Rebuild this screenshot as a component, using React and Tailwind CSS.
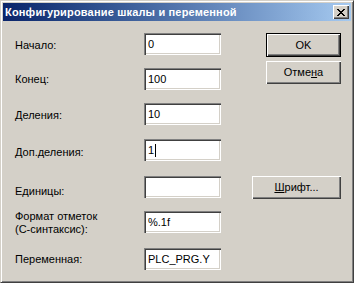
import React from "react";

const font = "font-['Liberation_Sans',Arial,sans-serif]";

function Field({ children }) {
  return (
    <div className="w-[77px] h-[22px] bg-white shadow-[inset_1px_1px_0_#808080,inset_2px_2px_0_#404040,inset_-1px_-1px_0_#ffffff,inset_-2px_-2px_0_#d4d0c8] flex items-center pl-[4px] text-[11px] text-black leading-none">
      {children}
    </div>
  );
}

function Row({ label, value, lt, mt }) {
  return (
    <div className={`flex items-start ${mt}`}>
      <div className={`w-[129px] text-[11px] leading-[13px] text-black ${lt}`}>{label}</div>
      <Field>{value}</Field>
    </div>
  );
}

function Btn({ children, w, def }) {
  const inner = (
    <div className="h-full w-full flex items-center justify-center bg-[#d4d0c8] shadow-[inset_1px_1px_0_#ffffff,inset_-1px_-1px_0_#404040,inset_-2px_-2px_0_#808080] text-[11px] text-black leading-none">
      {children}
    </div>
  );
  if (def) {
    return <div className={`${w} h-[24px] border border-black`}>{inner}</div>;
  }
  return <div className={`${w} h-[23px]`}>{inner}</div>;
}

export default function App() {
  return (
    <div className={`w-[354px] h-[283px] bg-[#d4d0c8] border border-t-[#d4d0c8] border-l-[#d4d0c8] border-r-[#404040] border-b-[#404040] shadow-[inset_1px_1px_0_#ffffff,inset_-1px_-1px_0_#808080] p-[2px] ${font}`}>
      <div className="h-[18px] flex items-center justify-between bg-linear-to-r from-[#0a246a] to-[#a6caf0] pl-[2px] pr-[2px]">
        <span className="text-white font-bold text-[11px] leading-none tracking-[0.17px]">Конфигурирование шкалы и переменной</span>
        <div className="w-[16px] h-[14px] bg-[#d4d0c8] shadow-[inset_1px_1px_0_#ffffff,inset_-1px_-1px_0_#404040,inset_-2px_-2px_0_#808080] flex items-center justify-center">
          <svg width="8" height="7" viewBox="0 0 8 7" shapeRendering="crispEdges">
            <path d="M0 0h2v1h-2zM6 0h2v1h-2zM1 1h2v1h-2zM5 1h2v1h-2zM2 2h4v1h-4zM3 3h2v1h-2zM2 4h4v1h-4zM1 5h2v1h-2zM5 5h2v1h-2zM0 6h2v1h-2zM6 6h2v1h-2z" fill="#000" />
          </svg>
        </div>
      </div>
      <div className="flex pl-[12px] pt-[12px]">
        <div className="flex flex-col">
          <Row label="Начало:" value="0" lt="mt-[6px]" mt="" />
          <Row label="Конец:" value="100" lt="mt-[5px]" mt="mt-[13px]" />
          <Row label="Деления:" value="10" lt="mt-[6px]" mt="mt-[13px]" />
          <Row
            label="Доп.деления:"
            value={<span className="flex items-center">1<span className="inline-block w-px h-[13px] bg-black ml-[1px]" /></span>}
            lt="mt-[7px]"
            mt="mt-[14px]"
          />
          <Row label="Единицы:" value="" lt="mt-[9px]" mt="mt-[15px]" />
          <Row
            label={<>Формат отметок<br />(C-синтаксис):</>}
            value="%.1f"
            lt="mt-[-1px] leading-[12px]"
            mt="mt-[13px]"
          />
          <Row label="Переменная:" value="PLC_PRG.Y" lt="mt-[5px]" mt="mt-[12px]" />
        </div>
        <div className="ml-[31px] w-[89px] flex flex-col items-end">
          <Btn w="w-[75px]" def>OK</Btn>
          <div className="mt-[4px]">
            <Btn w="w-[75px]">Отме<span className="underline">н</span>а</Btn>
          </div>
          <div className="mt-[92px]">
            <Btn w="w-[89px]"><span className="underline">Ш</span>рифт...</Btn>
          </div>
        </div>
      </div>
    </div>
  );
}
